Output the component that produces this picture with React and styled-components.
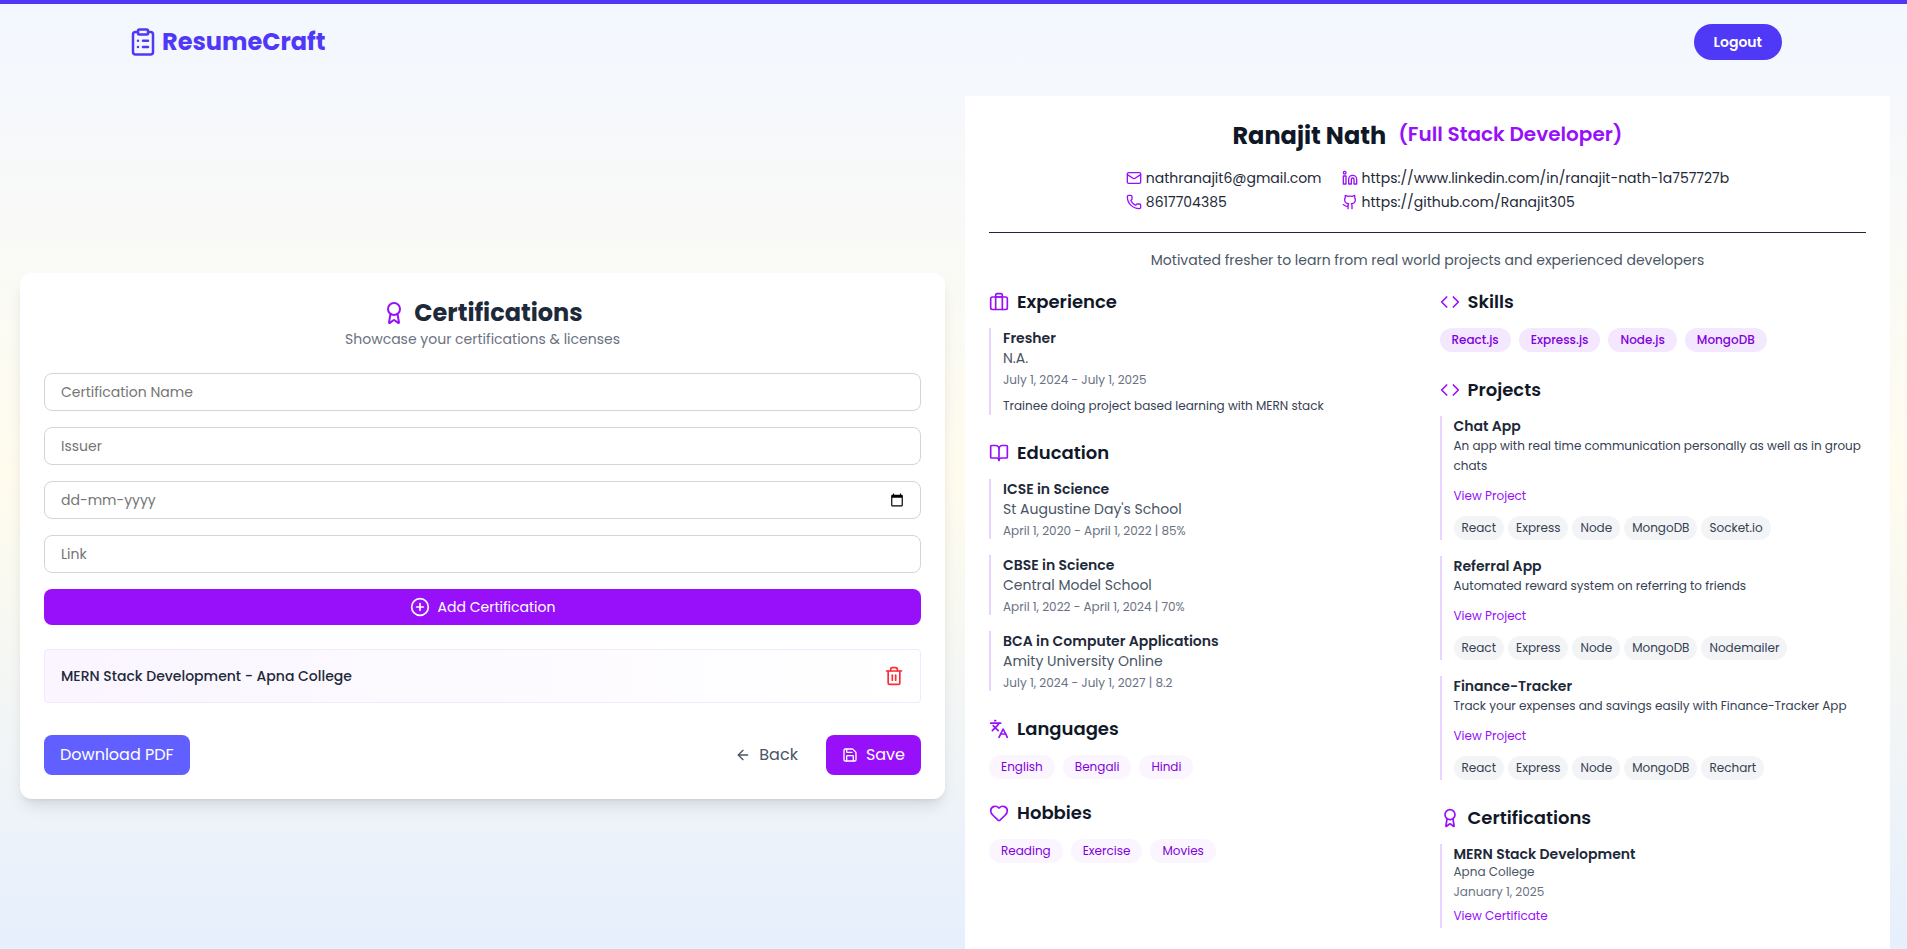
import React from "react";
import styled, { createGlobalStyle, css } from "styled-components";
import {
  ClipboardList,
  Award,
  CirclePlus,
  Trash2,
  ArrowLeft,
  Save,
  Mail,
  Phone,
  Linkedin,
  Github,
  BookOpen,
  Languages,
  Heart,
  Code,
} from "lucide-react";

const GlobalStyle = createGlobalStyle`
  *, *::before, *::after { box-sizing: border-box; }
  html { scrollbar-width: none; }
  body {
    margin: 0;
    font-family: Poppins, Inter, "Liberation Sans", sans-serif;
    font-size: 16px;
    line-height: 24px;
    color: #101828;
  }
  h1, h2, h3, p, ul { margin: 0; padding: 0; }
  ul { list-style: none; }
  button, input { font: inherit; }
  button { cursor: pointer; }
  a { text-decoration: none; }
  svg { flex-shrink: 0; }
`;

const Page = styled.div`
  min-height: 100vh;
  padding-bottom: 16px;
  border-top: 4px solid #4f39f6;
  background: linear-gradient(to bottom, #f3f7ff, #fffcee 48%, #e4eefe);
`;

const Header = styled.header`
  display: flex;
  align-items: center;
  justify-content: space-between;
  height: 76px;
  margin-bottom: 16px;
  padding: 0 125px 0 128px;
`;

const Brand = styled.a`
  display: flex;
  align-items: center;
  gap: 4px;
  color: #4f39f6;
  font-size: 24px;
  line-height: 32px;
  font-weight: 700;
`;

const LogoutButton = styled.button`
  height: 36px;
  padding: 0 20px;
  border: 0;
  border-radius: 18px;
  background: #4f39f6;
  color: #fff;
  font-size: 14px;
  line-height: 20px;
  font-weight: 600;
`;

const Main = styled.main`
  display: grid;
  grid-template-columns: minmax(0, 1fr) minmax(0, 1fr);
  align-items: center;
  gap: 20px;
  padding: 0 17px 0 20px;
`;

const FormCard = styled.section`
  padding: 24px;
  border-radius: 12px;
  background: #fff;
  box-shadow: 0 10px 15px -3px rgba(0, 0, 0, 0.1), 0 4px 6px -4px rgba(0, 0, 0, 0.1);
`;

const FormTitle = styled.h2`
  display: flex;
  align-items: center;
  justify-content: center;
  gap: 8px;
  color: #1e2939;
  font-size: 24px;
  line-height: 32px;
  font-weight: 700;
  svg { color: #9810fa; }
`;

const FormSubtitle = styled.p`
  margin-bottom: 24px;
  color: #6a7282;
  font-size: 14px;
  line-height: 20px;
  text-align: center;
`;

const Form = styled.form`
  display: flex;
  flex-direction: column;
  gap: 16px;
`;

const Field = styled.label`
  display: flex;
  align-items: center;
  height: 38px;
  padding: 0 16px;
  border: 1px solid #d1d5dc;
  border-radius: 8px;
  background: #fff;
  &:focus-within { border-color: #9810fa; }
`;

const FieldInput = styled.input`
  flex: 1;
  min-width: 0;
  padding: 0;
  border: 0;
  outline: 0;
  background: transparent;
  color: #1e2939;
  font-size: 14px;
  line-height: 20px;
  &::placeholder { color: #757575; opacity: 1; }
`;

const IconButton = styled.button`
  display: flex;
  padding: 0;
  border: 0;
  background: transparent;
  color: ${(p) => p.$color};
`;

const AddButton = styled.button`
  display: flex;
  align-items: center;
  justify-content: center;
  gap: 8px;
  height: 36px;
  border: 0;
  border-radius: 8px;
  background: #9810fa;
  color: #fff;
  font-size: 14px;
  line-height: 20px;
`;

const SavedEntry = styled.div`
  display: flex;
  align-items: center;
  justify-content: space-between;
  margin: 24px 0 32px;
  padding: 16px;
  border: 1px solid #f3e8ff;
  border-radius: 4px;
  background: linear-gradient(to right, #faf5ff, #fff);
  color: #1e2939;
  font-size: 14px;
  line-height: 20px;
  font-weight: 500;
`;

const Actions = styled.div`
  display: flex;
  justify-content: space-between;
`;

const ActionGroup = styled.div`
  display: flex;
  gap: 12px;
`;

const actionKinds = {
  download: css`background: #615fff; color: #fff;`,
  plain: css`background: transparent; color: #4a5565;`,
  save: css`background: #9810fa; color: #fff;`,
};

const ActionButton = styled.button`
  display: flex;
  align-items: center;
  gap: 8px;
  height: 40px;
  padding: 0 16px;
  border: 0;
  border-radius: 8px;
  line-height: 24px;
  ${(p) => actionKinds[p.$kind]}
`;

const Resume = styled.article`
  padding: 24px 24px 48px;
  background: #fff;
`;

const ResumeHeader = styled.header`
  display: flex;
  flex-direction: column;
  align-items: center;
  padding-bottom: 20px;
  border-bottom: 1px solid #1e2939;
`;

const NameRow = styled.div`
  display: flex;
  gap: 12px;
  margin-bottom: 16px;
`;

const Name = styled.h1`
  font-size: 24px;
  line-height: 32px;
  font-weight: 700;
`;

const Role = styled.p`
  color: #9810fa;
  font-size: 20px;
  line-height: 28px;
  font-weight: 600;
`;

const Contacts = styled.div`
  display: grid;
  grid-template-columns: auto auto;
  gap: 4px 20px;
`;

const Contact = styled.a`
  display: flex;
  align-items: center;
  gap: 4px;
  color: #1e2939;
  font-size: 14px;
  line-height: 20px;
  svg { color: #9810fa; }
`;

const Summary = styled.p`
  margin: 16px 0;
  color: #4a5565;
  font-size: 14px;
  line-height: 23px;
  text-align: center;
`;

const Columns = styled.div`
  display: grid;
  grid-template-columns: minmax(0, 1fr) minmax(0, 1fr);
  gap: 24px;
`;

const Column = styled.div`
  display: flex;
  flex-direction: column;
  gap: 24px;
`;

const TagSections = styled.div`
  display: flex;
  flex-direction: column;
  gap: 20px;
`;

const SectionTitle = styled.h2`
  display: flex;
  align-items: center;
  gap: 8px;
  margin-bottom: 12px;
  font-size: 18px;
  line-height: 28px;
  font-weight: 600;
  svg { color: #9810fa; }
`;

const Entries = styled.div`
  display: flex;
  flex-direction: column;
  gap: 16px;
`;

const Entry = styled.div`
  padding-left: 12px;
  border-left: 2px solid #e9d4ff;
`;

const EntryTitle = styled.h3`
  color: #1e2939;
  font-size: 14px;
  line-height: 20px;
  font-weight: 600;
`;

const Place = styled.p`
  color: #4a5565;
  font-size: ${(p) => (p.$small ? "12px" : "14px")};
  line-height: ${(p) => (p.$small ? "16px" : "20px")};
`;

const Dates = styled.p`
  margin-top: 4px;
  color: #6a7282;
  font-size: 12px;
  line-height: 16px;
`;

const Details = styled.p`
  margin-top: 8px;
  color: #364153;
  font-size: 12px;
  line-height: 19px;
`;

const ProjectText = styled.p`
  margin-bottom: 8px;
  color: #364153;
  font-size: 12px;
  line-height: 20px;
`;

const EntryLink = styled.a`
  display: block;
  width: fit-content;
  color: #9810fa;
  font-size: 12px;
  line-height: 24px;
`;

const CertificateLink = styled(EntryLink)`
  margin-top: 4px;
`;

const Tags = styled.ul`
  display: flex;
  flex-wrap: wrap;
  gap: 8px;
`;

const TechTags = styled(Tags)`
  margin-top: 8px;
  gap: 4px;
`;

const tagKinds = {
  skill: css`background: #f3e8ff; color: #8200db; font-weight: 500;`,
  soft: css`background: #faf5ff; color: #8200db;`,
  tech: css`padding: 4px 8px; background: #f3f4f6; color: #364153;`,
};

const Tag = styled.li`
  padding: 4px 12px;
  border-radius: 12px;
  font-size: 12px;
  line-height: 16px;
  ${(p) => tagKinds[p.$kind]}
`;

const education = [
  ["ICSE in Science", "St Augustine Day's School", "April 1, 2020 - April 1, 2022 | 85%"],
  ["CBSE in Science", "Central Model School", "April 1, 2022 - April 1, 2024 | 70%"],
  ["BCA in Computer Applications", "Amity University Online", "July 1, 2024 - July 1, 2027 | 8.2"],
];

const projects = [
  ["Chat App", "An app with real time communication personally as well as in group chats", "Socket.io"],
  ["Referral App", "Automated reward system on referring to friends", "Nodemailer"],
  ["Finance-Tracker", "Track your expenses and savings easily with Finance-Tracker App", "Rechart"],
];

function LuggageIcon() {
  return (
    <svg width="20" height="20" viewBox="0 0 24 24" fill="none" stroke="currentColor" strokeWidth="2" strokeLinecap="round" strokeLinejoin="round" aria-hidden="true">
      <rect x="2" y="6" width="20" height="15" rx="2" />
      <path d="M8 21V4a2 2 0 0 1 2-2h4a2 2 0 0 1 2 2v17M8 6h8" />
    </svg>
  );
}

function CalendarIcon() {
  return (
    <svg width="14" height="14" viewBox="0 0 24 24" fill="currentColor" aria-hidden="true">
      <path d="M20 3h-1V1h-2v2H7V1H5v2H4c-1.100 0-2 .9-2 2v16c0 1.100.9 2 2 2h16c1.100 0 2-.9 2-2V5c0-1.100-.9-2-2-2zm0 18H4V8h16v13z" />
    </svg>
  );
}

function Section({ icon: Icon, title, children }) {
  return (
    <section>
      <SectionTitle>
        <Icon size={20} />
        {title}
      </SectionTitle>
      {children}
    </section>
  );
}

function TagList({ kind, items }) {
  const List = kind === "tech" ? TechTags : Tags;
  return (
    <List>
      {items.map((item) => (
        <Tag key={item} $kind={kind}>{item}</Tag>
      ))}
    </List>
  );
}

function CertificationForm() {
  return (
    <FormCard>
      <FormTitle>
        <Award size={24} />
        Certifications
      </FormTitle>
      <FormSubtitle>Showcase your certifications &amp; licenses</FormSubtitle>
      <Form onSubmit={(e) => e.preventDefault()}>
        <Field>
          <FieldInput type="text" placeholder="Certification Name" aria-label="Certification Name" />
        </Field>
        <Field>
          <FieldInput type="text" placeholder="Issuer" aria-label="Issuer" />
        </Field>
        <Field>
          <FieldInput type="text" placeholder="dd-mm-yyyy" aria-label="Date" />
          <IconButton type="button" $color="#000" aria-label="Open calendar">
            <CalendarIcon />
          </IconButton>
        </Field>
        <Field>
          <FieldInput type="url" placeholder="Link" aria-label="Link" />
        </Field>
        <AddButton type="submit">
          <CirclePlus size={20} />
          Add Certification
        </AddButton>
      </Form>
      <SavedEntry>
        MERN Stack Development - Apna College
        <IconButton type="button" $color="#fb2c36" aria-label="Delete certification">
          <Trash2 size={20} />
        </IconButton>
      </SavedEntry>
      <Actions>
        <ActionButton type="button" $kind="download">Download PDF</ActionButton>
        <ActionGroup>
          <ActionButton type="button" $kind="plain">
            <ArrowLeft size={16} />
            Back
          </ActionButton>
          <ActionButton type="button" $kind="save">
            <Save size={16} />
            Save
          </ActionButton>
        </ActionGroup>
      </Actions>
    </FormCard>
  );
}

function ResumePreview() {
  return (
    <Resume>
      <ResumeHeader>
        <NameRow>
          <Name>Ranajit Nath</Name>
          <Role>(Full Stack Developer)</Role>
        </NameRow>
        <Contacts>
          <Contact href="mailto:nathranajit6@gmail.com"><Mail size={16} />nathranajit6@gmail.com</Contact>
          <Contact href="https://www.linkedin.com/in/ranajit-nath-1a757727b"><Linkedin size={16} />https://www.linkedin.com/in/ranajit-nath-1a757727b</Contact>
          <Contact href="tel:8617704385"><Phone size={16} />8617704385</Contact>
          <Contact href="https://github.com/Ranajit305"><Github size={16} />https://github.com/Ranajit305</Contact>
        </Contacts>
      </ResumeHeader>
      <Summary>Motivated fresher to learn from real world projects and experienced developers</Summary>
      <Columns>
        <Column>
          <Section icon={LuggageIcon} title="Experience">
            <Entry>
              <EntryTitle>Fresher</EntryTitle>
              <Place>N.A.</Place>
              <Dates>July 1, 2024 - July 1, 2025</Dates>
              <Details>Trainee doing project based learning with MERN stack</Details>
            </Entry>
          </Section>
          <Section icon={BookOpen} title="Education">
            <Entries>
              {education.map(([degree, school, dates]) => (
                <Entry key={degree}>
                  <EntryTitle>{degree}</EntryTitle>
                  <Place>{school}</Place>
                  <Dates>{dates}</Dates>
                </Entry>
              ))}
            </Entries>
          </Section>
          <TagSections>
            <Section icon={Languages} title="Languages">
              <TagList kind="soft" items={["English", "Bengali", "Hindi"]} />
            </Section>
            <Section icon={Heart} title="Hobbies">
              <TagList kind="soft" items={["Reading", "Exercise", "Movies"]} />
            </Section>
          </TagSections>
        </Column>
        <Column>
          <Section icon={Code} title="Skills">
            <TagList kind="skill" items={["React.js", "Express.js", "Node.js", "MongoDB"]} />
          </Section>
          <Section icon={Code} title="Projects">
            <Entries>
              {projects.map(([name, text, extra]) => (
                <Entry key={name}>
                  <EntryTitle>{name}</EntryTitle>
                  <ProjectText>{text}</ProjectText>
                  <EntryLink href="#project">View Project</EntryLink>
                  <TagList kind="tech" items={["React", "Express", "Node", "MongoDB", extra]} />
                </Entry>
              ))}
            </Entries>
          </Section>
          <Section icon={Award} title="Certifications">
            <Entry>
              <EntryTitle>MERN Stack Development</EntryTitle>
              <Place $small>Apna College</Place>
              <Dates>January 1, 2025</Dates>
              <CertificateLink href="#certificate">View Certificate</CertificateLink>
            </Entry>
          </Section>
        </Column>
      </Columns>
    </Resume>
  );
}

export default function App() {
  return (
    <>
      <GlobalStyle />
      <Page>
        <Header>
          <Brand href="#home">
            <ClipboardList size={30} />
            ResumeCraft
          </Brand>
          <LogoutButton type="button">Logout</LogoutButton>
        </Header>
        <Main>
          <CertificationForm />
          <ResumePreview />
        </Main>
      </Page>
    </>
  );
}
